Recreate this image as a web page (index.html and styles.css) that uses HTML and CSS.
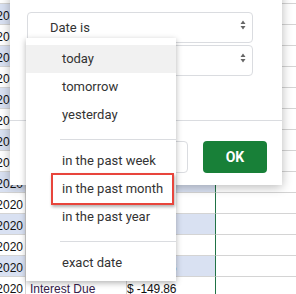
FILE: index.html
```html
<!DOCTYPE html>
<html>
  <head>
    <title>Filter by date</title>
    <link rel="stylesheet" href="styles.css">
  </head>
  <body>
    <div class="sheet">
      <div class="row"><div class="cell a">2020</div><div class="cell b"></div><div class="cell c"></div><div class="cell d"></div></div>
      <div class="row band"><div class="cell a">2020</div><div class="cell b"></div><div class="cell c"></div><div class="cell d"></div></div>
      <div class="row"><div class="cell a">2020</div><div class="cell b"></div><div class="cell c"></div><div class="cell d"></div></div>
      <div class="row band"><div class="cell a">2020</div><div class="cell b"></div><div class="cell c"></div><div class="cell d"></div></div>
      <div class="row"><div class="cell a">2020</div><div class="cell b"></div><div class="cell c"></div><div class="cell d"></div></div>
      <div class="row band"><div class="cell a">2020</div><div class="cell b"></div><div class="cell c"></div><div class="cell d"></div></div>
      <div class="row"><div class="cell a">2020</div><div class="cell b"></div><div class="cell c"></div><div class="cell d"></div></div>
      <div class="row band"><div class="cell a">2020</div><div class="cell b"></div><div class="cell c"></div><div class="cell d"></div></div>
      <div class="row"><div class="cell a">2020</div><div class="cell b"></div><div class="cell c"></div><div class="cell d"></div></div>
      <div class="row band"><div class="cell a">2020</div><div class="cell b"></div><div class="cell c"></div><div class="cell d"></div></div>
      <div class="row"><div class="cell a">2020</div><div class="cell b"></div><div class="cell c"></div><div class="cell d"></div></div>
      <div class="row band"><div class="cell a">2020</div><div class="cell b"></div><div class="cell c"></div><div class="cell d"></div></div>
      <div class="row"><div class="cell a">2020</div><div class="cell b"></div><div class="cell c"></div><div class="cell d"></div></div>
      <div class="row band"><div class="cell a">2020</div><div class="cell b">Interest Due</div><div class="cell c">$ -149.86</div><div class="cell d"></div></div>
      <div class="row"><div class="cell a">2020</div><div class="cell b">Interest Due</div><div class="cell c">$ -149.86</div><div class="cell d"></div></div>
    </div>

    <div class="dialog">
      <div class="select">
        <span>Date is</span>
        <svg class="arrows" width="6" height="10" viewBox="0 0 6 10"><path d="M0.5 4 L3 0.5 L5.5 4 Z M0.5 6 L5.5 6 L3 9.5 Z" fill="#666"/></svg>
      </div>
      <div class="select">
        <span></span>
        <svg class="arrows" width="6" height="10" viewBox="0 0 6 10"><path d="M0.5 4 L3 0.5 L5.5 4 Z M0.5 6 L5.5 6 L3 9.5 Z" fill="#666"/></svg>
      </div>
      <div class="divider"></div>
      <div class="actions">
        <button class="btn btn-cancel">Cancel</button>
        <button class="btn btn-ok">OK</button>
      </div>

      <ul class="menu">
        <li class="menu-item active">today</li>
        <li class="menu-item">tomorrow</li>
        <li class="menu-item">yesterday</li>
        <li class="menu-sep"></li>
        <li class="menu-item">in the past week</li>
        <li class="menu-item">in the past month<span class="mark"></span></li>
        <li class="menu-item">in the past year</li>
        <li class="menu-sep"></li>
        <li class="menu-item">exact date</li>
      </ul>
    </div>
  </body>
</html>
```

FILE: styles.css
```css
body {
  margin: 0;
  font-family: Roboto, "Liberation Sans", Arial, sans-serif;
  background-color: #ffffff;
  overflow: hidden;
}

/* spreadsheet behind the dialog */
.sheet {
  margin-top: -17px;
  font-family: "Liberation Sans", Arial, sans-serif;
  font-size: 12px;
  color: #111;
}

.row {
  display: grid;
  grid-template-columns: 26px 101px 89px 1fr;
  height: 21px;
}

.cell {
  box-sizing: border-box;
  border-bottom: 1px solid #d4d4d4;
  border-right: 1px solid #d4d4d4;
  padding-top: 4px;
  line-height: 16px;
  white-space: nowrap;
  overflow: hidden;
}

.band .a,
.band .b,
.band .c {
  background-color: #d9e1f2;
}

.cell.a {
  display: flex;
  justify-content: flex-end;
  padding-right: 2px;
}

.cell.b {
  padding-left: 4px;
  color: #36204a;
}

.cell.c {
  padding-left: 0;
  letter-spacing: -0.15px;
  border-right-color: #217346;
}

.cell.d {
  border-right: none;
}

/* filter dialog */
.dialog {
  position: absolute;
  left: 10px;
  top: -10px;
  width: 272px;
  box-sizing: border-box;
  padding: 22px 0 12px;
  background-color: #ffffff;
  box-shadow: 0 2px 10px rgba(0, 0, 0, 0.28);
}

.select {
  display: flex;
  align-items: center;
  justify-content: space-between;
  box-sizing: border-box;
  width: 226px;
  height: 31px;
  margin-left: 17px;
  padding: 0 6px 0 22px;
  border: 1px solid #dadce0;
  border-radius: 4px;
  font-size: 13px;
  color: #333;
}

.select + .select {
  margin-top: 2px;
}

.arrows {
  margin-bottom: 6px;
}

.divider {
  margin-top: 44px;
  height: 1px;
  background-color: #dadce0;
}

.actions {
  display: flex;
  justify-content: flex-end;
  gap: 15px;
  margin-top: 20px;
  padding-right: 15px;
}

.btn {
  box-sizing: border-box;
  height: 32px;
  border-radius: 4px;
  font-family: Roboto, "Liberation Sans", Arial, sans-serif;
  font-size: 14px;
  font-weight: 700;
  cursor: pointer;
}

.btn-cancel {
  width: 80px;
  background-color: #ffffff;
  border: 1px solid #dadce0;
  color: #1a73e8;
}

.btn-ok {
  width: 64px;
  background-color: #188038;
  border: none;
  color: #ffffff;
}

/* condition dropdown */
.menu {
  position: absolute;
  left: 16px;
  top: 48px;
  width: 150px;
  margin: 0;
  padding: 7px 0 4px;
  list-style: none;
  background-color: #ffffff;
  box-shadow: 0 2px 6px rgba(0, 0, 0, 0.3);
  font-size: 13px;
  color: #333;
}

.menu-item {
  position: relative;
  height: 28px;
  line-height: 28px;
  padding-left: 36px;
  white-space: nowrap;
}

.menu-item.active {
  background-color: #f1f1f1;
}

.menu-sep {
  height: 1px;
  margin: 10px 0 7px 34px;
  background-color: #dadce0;
}

.mark {
  position: absolute;
  left: 25px;
  top: -2px;
  width: 123px;
  height: 32px;
  box-sizing: border-box;
  border: 2px solid #e8453c;
  box-shadow: 1px 2px 3px rgba(0, 0, 0, 0.3);
}
```
